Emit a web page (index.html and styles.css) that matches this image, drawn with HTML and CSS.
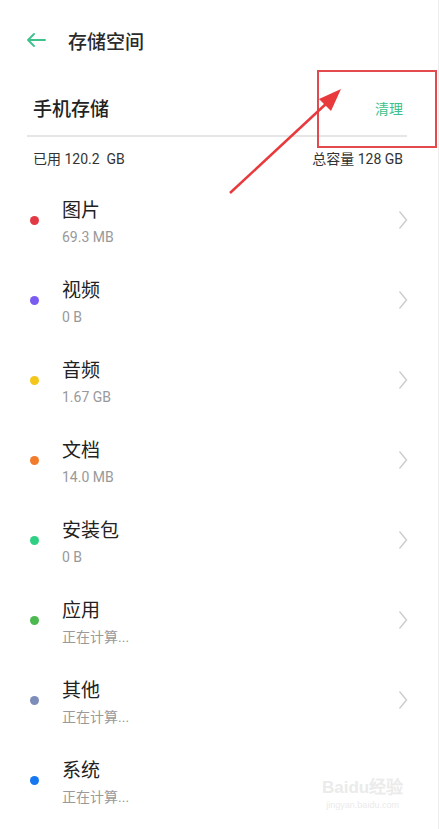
FILE: index.html
```html
<!DOCTYPE html>
<html lang="zh-CN">
<head>
    <meta charset="UTF-8">
    <meta name="viewport" content="width=device-width, initial-scale=1.0">
    <title>存储空间</title>
    <link rel="stylesheet" href="styles.css">
</head>
<body>
    <div class="page">
        <div class="header">
            <svg class="back" width="20" height="14" viewBox="0 0 20 14">
                <path d="M19 7H2M8 1L2 7l6 6" fill="none" stroke="#3cc28a" stroke-width="1.8" stroke-linecap="round" stroke-linejoin="round"/>
            </svg>
            <span class="title">存储空间</span>
        </div>

        <div class="storage">
            <div class="storage-head">
                <span class="storage-name">手机存储</span>
                <span class="clean">清理</span>
            </div>
            <div class="divider"></div>
            <div class="usage">
                <span>已用 120.2&nbsp; GB</span>
                <span>总容量 128 GB</span>
            </div>
        </div>

        <div class="list">
            <div class="row">
                <span class="dot red"></span>
                <div class="info"><div class="name">图片</div><div class="size">69.3 MB</div></div>
                <svg class="chev" width="10" height="20" viewBox="0 0 10 20"><path d="M1.5 1.5L8.5 10L1.5 18.5" fill="none" stroke="#cdcdcd" stroke-width="1.5"/></svg>
            </div>
            <div class="row">
                <span class="dot purple"></span>
                <div class="info"><div class="name">视频</div><div class="size">0 B</div></div>
                <svg class="chev" width="10" height="20" viewBox="0 0 10 20"><path d="M1.5 1.5L8.5 10L1.5 18.5" fill="none" stroke="#cdcdcd" stroke-width="1.5"/></svg>
            </div>
            <div class="row">
                <span class="dot yellow"></span>
                <div class="info"><div class="name">音频</div><div class="size">1.67 GB</div></div>
                <svg class="chev" width="10" height="20" viewBox="0 0 10 20"><path d="M1.5 1.5L8.5 10L1.5 18.5" fill="none" stroke="#cdcdcd" stroke-width="1.5"/></svg>
            </div>
            <div class="row">
                <span class="dot orange"></span>
                <div class="info"><div class="name">文档</div><div class="size">14.0 MB</div></div>
                <svg class="chev" width="10" height="20" viewBox="0 0 10 20"><path d="M1.5 1.5L8.5 10L1.5 18.5" fill="none" stroke="#cdcdcd" stroke-width="1.5"/></svg>
            </div>
            <div class="row">
                <span class="dot mint"></span>
                <div class="info"><div class="name">安装包</div><div class="size">0 B</div></div>
                <svg class="chev" width="10" height="20" viewBox="0 0 10 20"><path d="M1.5 1.5L8.5 10L1.5 18.5" fill="none" stroke="#cdcdcd" stroke-width="1.5"/></svg>
            </div>
            <div class="row">
                <span class="dot green"></span>
                <div class="info"><div class="name">应用</div><div class="size">正在计算...</div></div>
                <svg class="chev" width="10" height="20" viewBox="0 0 10 20"><path d="M1.5 1.5L8.5 10L1.5 18.5" fill="none" stroke="#cdcdcd" stroke-width="1.5"/></svg>
            </div>
            <div class="row">
                <span class="dot slate"></span>
                <div class="info"><div class="name">其他</div><div class="size">正在计算...</div></div>
                <svg class="chev" width="10" height="20" viewBox="0 0 10 20"><path d="M1.5 1.5L8.5 10L1.5 18.5" fill="none" stroke="#cdcdcd" stroke-width="1.5"/></svg>
            </div>
            <div class="row">
                <span class="dot blue"></span>
                <div class="info"><div class="name">系统</div><div class="size">正在计算...</div></div>
            </div>
        </div>

        <!-- annotation drawn over the screenshot -->
        <div class="mark-box"></div>
        <svg class="mark-arrow" width="439" height="829" viewBox="0 0 439 829">
            <line x1="230" y1="193" x2="328" y2="102" stroke="#e8393c" stroke-width="2.5"/>
            <polygon points="341,89 319,99 331,111" fill="#e8393c"/>
        </svg>

        <div class="watermark">
            <div class="wm-logo">Bai<span class="paw">du</span>经验</div>
            <div class="wm-url">jingyan.baidu.com</div>
        </div>
    </div>
</body>
</html>
```

FILE: styles.css
```css
body {
    margin: 0;
    padding: 0;
    background-color: #fff;
    font-family: Roboto, "Noto Sans CJK SC", sans-serif;
    color: #222;
}

.page {
    position: relative;
    width: 438px;
    height: 829px;
    border-right: 1px solid #ececec;
    overflow: hidden;
}

.header {
    display: flex;
    align-items: center;
    height: 80px;
    padding-left: 26px;
}

.back {
    margin-right: 22px;
}

.title {
    font-size: 19px;
    font-weight: 500;
    color: #2a2a2a;
}

.storage {
    padding: 0 31px 0 27px;
}

.storage-head {
    display: flex;
    justify-content: space-between;
    align-items: center;
    height: 55px;
    padding: 0 4px 0 6px;
}

.storage-name {
    font-size: 19px;
    font-weight: 500;
    color: #222;
}

.clean {
    font-size: 14px;
    color: #3cc28a;
}

.divider {
    height: 2px;
    background-color: #e6e6e6;
}

.usage {
    display: flex;
    justify-content: space-between;
    align-items: center;
    height: 42px;
    padding: 0 4px 0 6px;
    font-size: 14px;
    color: #333;
}

.row {
    display: flex;
    align-items: center;
    height: 80px;
    padding-left: 30px;
}

.dot {
    width: 9px;
    height: 9px;
    border-radius: 50%;
    margin-right: 23px;
    margin-top: 2px;
}

.red { background-color: #e23a45; }
.purple { background-color: #7a5cf2; }
.yellow { background-color: #f5c71a; }
.orange { background-color: #f27b2c; }
.mint { background-color: #2fd083; }
.green { background-color: #4cb850; }
.slate { background-color: #7d8dba; }
.blue { background-color: #1677f0; }

.info {
    flex: 1;
    padding-top: 6px;
}

.name {
    font-size: 19px;
    line-height: 24px;
    color: #222;
}

.size {
    margin-top: 5px;
    font-size: 14px;
    line-height: 18px;
    color: #999;
}

.chev {
    margin-right: 30px;
    margin-top: 2px;
}

.mark-box {
    position: absolute;
    left: 317px;
    top: 70px;
    width: 116px;
    height: 74px;
    border: 2px solid #e24a4e;
}

.mark-arrow {
    position: absolute;
    left: 0;
    top: 0;
    pointer-events: none;
}

.watermark {
    position: absolute;
    left: 322px;
    top: 778px;
    color: #ebebeb;
    text-align: center;
}

.wm-logo {
    font-family: "Liberation Sans", sans-serif;
    font-size: 17px;
    font-weight: bold;
    line-height: 20px;
}

.wm-url {
    font-family: "Liberation Sans", sans-serif;
    font-size: 9px;
    line-height: 14px;
}
```
